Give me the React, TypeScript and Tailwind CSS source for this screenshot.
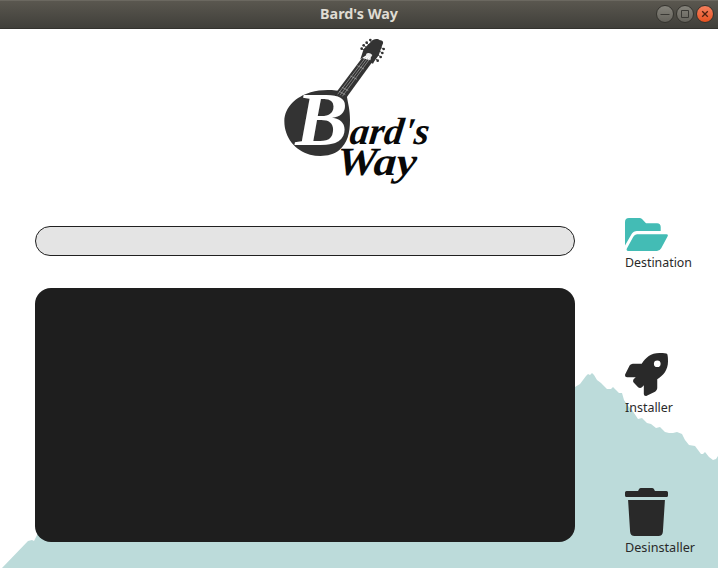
import type { ReactNode } from "react";

function WindowButton({ close, children }: { close?: boolean; children: ReactNode }) {
  return (
    <button
      className={
        close
          ? "flex size-[18px] items-center justify-center rounded-full border border-[#35332e] bg-linear-to-b from-[#f47f5c] to-[#e6521f] text-[#4b2010]"
          : "flex size-[18px] items-center justify-center rounded-full border border-[#35342f] bg-linear-to-b from-[#85837b] to-[#65635c] text-[#3a3935]"
      }
    >
      <svg viewBox="0 0 16 16" className="size-4 shrink-0" fill="none" stroke="currentColor" strokeWidth="1">
        {children}
      </svg>
    </button>
  );
}

function TitleBar() {
  return (
    <header className="grid h-[29px] grid-cols-[1fr_auto_1fr] items-center border-b border-[#33322e] bg-linear-to-b from-[#5b5850] to-[#403f3a] shadow-[inset_0_1px_0_#6b6860]">
      <span />
      <svg width="78" height="28" className="overflow-visible">
        <text x="0" y="19" textLength="78" lengthAdjust="spacingAndGlyphs" className="fill-[#dfdbd2] font-['Noto_Sans',sans-serif] text-[14px] font-bold">
          Bard's Way
        </text>
      </svg>
      <div className="flex justify-end gap-[2px] pr-1">
        <WindowButton>
          <path d="M3.5 8.5h9" />
        </WindowButton>
        <WindowButton>
          <path d="M4.5 4.5h7v7h-7z" />
        </WindowButton>
        <WindowButton close>
          <path d="M5.2 5.2l5.6 5.6M10.8 5.2l-5.6 5.6" strokeWidth="1.3" />
        </WindowButton>
      </div>
    </header>
  );
}

function Logo() {
  return (
    <svg viewBox="0 0 525 495" className="h-[165px] w-[175px]">
      {/* mandolin body */}
      <path
        d="M43 273C44 232 78 200 122 187C153 178 190 178 221 186Q228 190 231 202C234 220 240 240 240 270C240 310 232 340 208 360C185 379 150 381 120 374C76 362 43 324 43 273Z"
        fill="#333333"
      />
      {/* neck */}
      <path d="M195 192L276 84L309 93L229 203Z" fill="#333333" />
      <g stroke="#b5b5b5" strokeWidth="1.8" fill="none">
        <path d="M203 193L289 80M210 196L295 82M217 199L301 84" />
        <path d="M262 107L282 117M241 138L261 148M216 172L235 182M207 184L226 194" />
      </g>
      {/* headstock and tuning pegs */}
      <path d="M271 88L281 57L303 35C309 26 323 24 330 31C339 31 342 38 337 45L326 76L313 94L309 101L299 97L303 83L294 72Z" fill="#333333" />
      <path d="M288 72Q297 64 307 75L303 82L290 78Z" fill="#eeeeee" />
      <g stroke="#333333" strokeWidth="2.5">
        <path d="M285 61L275 56M291 53L281 46M297 45L289 38M304 38L300 29M331 52L341 57M328 63L337 69M324 75L333 81M316 85L324 93" />
      </g>
      <g fill="#333333">
        <circle cx="275" cy="56" r="4" />
        <circle cx="281" cy="46" r="4" />
        <circle cx="290" cy="38" r="4" />
        <circle cx="301" cy="30" r="4" />
        <circle cx="341" cy="57" r="4" />
        <circle cx="337" cy="69" r="4" />
        <circle cx="332" cy="81" r="4" />
        <circle cx="323" cy="92" r="4" />
      </g>
      <g className="font-['Liberation_Serif',serif] font-bold italic">
        <text x="76" y="346" textLength="158" lengthAdjust="spacingAndGlyphs" fill="#ffffff" fontSize="230">
          B
        </text>
        <g fill="#080808">
          <text transform="translate(236 343) skewX(-7)" textLength="238" lengthAdjust="spacingAndGlyphs" fontSize="114">
            ard's
          </text>
          <text transform="translate(198 434) skewX(-4)" textLength="240" lengthAdjust="spacingAndGlyphs" fontSize="120">
            Way
          </text>
        </g>
      </g>
    </svg>
  );
}

function Mountain() {
  return (
    <svg viewBox="0 0 718 539" className="absolute inset-0 h-[539px] w-[718px]">
      <path
        d="M2 539L28 512L32 511L34 512L37 506L45 490L300 440L575 358L580 355L586 347L588 345L590 346L592 344L594 346L597 351L601 354L607 360L611 360L613 358L616 361L619 364L622 364L624 371L628 377L632 381L636 387L638 390L642 389L647 394L651 395L656 399L660 398L665 403L669 404L673 404L677 403L682 405L685 411L689 416L695 417L701 425L703 425L705 423L709 428L713 431L716 430L718 427V539Z"
        fill="#bcdbda"
      />
    </svg>
  );
}

function Action({ label, width, children }: { label: string; width: number; children: ReactNode }) {
  return (
    <button className="flex flex-col items-start">
      {children}
      <svg width={width} height="20" className="overflow-visible">
        <text x="0" y="16" textLength={width} lengthAdjust="spacingAndGlyphs" className="fill-[#292929] font-['Noto_Sans',sans-serif] text-[13px]">
          {label}
        </text>
      </svg>
    </button>
  );
}

export default function App() {
  return (
    <div className="h-[568px] w-[718px] overflow-hidden bg-white">
      <TitleBar />
      <main className="relative h-[539px]">
        <Mountain />
        <div className="relative flex h-full flex-col">
          <div className="flex h-[189px] pt-px pl-[270px]">
            <Logo />
          </div>
          <div className="flex gap-[50px] pl-[35px]">
            <section className="flex w-[540px] flex-col gap-8 pt-2">
              <div className="h-[30px] rounded-full border border-[#202020] bg-[#e4e4e4]" />
              <div className="h-[254px] rounded-2xl bg-[#1e1e1e]" />
            </section>
            <nav className="flex flex-col">
              <div className="h-[135px]">
                <Action label="Destination" width={67}>
                  <svg viewBox="0 0 43 33" className="h-[33px] w-[43px] text-[#43bcb5]" fill="currentColor">
                    <path d="M0 4Q0 0 4 0H14.5Q16 0 17 1L21 5.2H32Q35.7 5.2 35.7 9V13H12Q8.5 13 6.6 16L0 27.5Z" />
                    <path d="M12 16.3H41.5Q43.6 16.3 42.5 18.5L36.2 30.3Q34.7 33 32 33H3.5Q.7 33 2 30.3L8.3 18.8Q9.6 16.3 12 16.3Z" />
                  </svg>
                </Action>
              </div>
              <div className="h-[135px]">
                <Action label="Installer" width={48}>
                  <svg viewBox="0 0 512 512" className="h-[43px] w-[43px] text-[#292929]" fill="currentColor">
                    <path d="M505.12 19.094c-1.189-5.531-6.658-11-12.207-12.188C460.716 0 435.507 0 410.407 0 307.175 0 245.269 55.203 199.052 128H94.838c-16.348.016-35.557 11.875-42.887 26.484L2.516 253.297A28.4 28.4 0 0 0 0 264a24.008 24.008 0 0 0 24.006 24h103.839l-22.474 22.469c-11.37 11.365-12.952 32.256 0 45.25l50.904 50.906c11.156 11.188 32.22 13.156 45.277 0L224 384.156V488a24.008 24.008 0 0 0 24 24 28.56 28.56 0 0 0 10.707-2.516l98.728-49.391c14.629-7.297 26.508-26.5 26.508-42.859V312.797c72.594-46.313 128.032-108.406 128.032-211.094.077-25.203.077-50.406-6.855-82.609zM384.04 168A40 40 0 1 1 424.05 128 40.023 40.023 0 0 1 384.04 168z" />
                  </svg>
                </Action>
              </div>
              <Action label="Desinstaller" width={70}>
                <svg viewBox="0 0 448 512" preserveAspectRatio="none" className="h-[48px] w-[43px] text-[#292929]" fill="currentColor">
                  <path d="M432 32H312l-9.4-18.7A24 24 0 0 0 281.1 0H166.8a23.72 23.72 0 0 0-21.4 13.3L136 32H16A16 16 0 0 0 0 48v32a16 16 0 0 0 16 16h416a16 16 0 0 0 16-16V48a16 16 0 0 0-16-16zM53.2 467a48 48 0 0 0 47.9 45h245.8a48 48 0 0 0 47.9-45L416 128H32z" />
                </svg>
              </Action>
            </nav>
          </div>
        </div>
      </main>
    </div>
  );
}
